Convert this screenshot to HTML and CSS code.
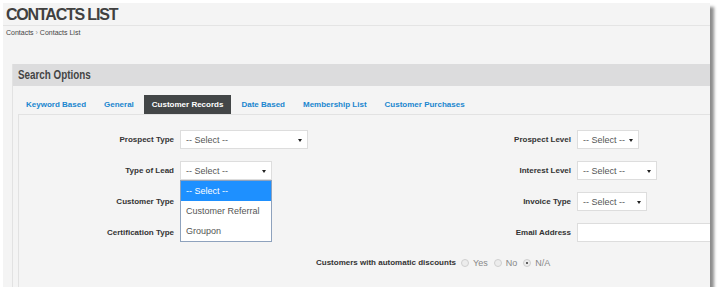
FILE: index.html
```html
<!DOCTYPE html>
<html lang="en">
<head>
    <meta charset="UTF-8">
    <title>Contacts List</title>
    <link rel="stylesheet" href="styles.css">
</head>
<body>
    <div class="shot">
        <h1 class="page-title">CONTACTS LIST</h1>
        <div class="breadcrumb">Contacts <span class="sep">›</span> Contacts List</div>

        <section class="panel">
            <div class="panel-head"><span>Search Options</span></div>

            <nav class="tabs">
                <a class="tab">Keyword Based</a>
                <a class="tab">General</a>
                <a class="tab active">Customer Records</a>
                <a class="tab">Date Based</a>
                <a class="tab">Membership List</a>
                <a class="tab">Customer Purchases</a>
            </nav>

            <div class="tab-body">
                <div class="form-grid">
                    <div class="field">
                        <label>Prospect Type</label>
                        <span class="select w128">-- Select --</span>
                    </div>
                    <div class="field">
                        <label>Prospect Level</label>
                        <span class="select w62">-- Select --</span>
                    </div>

                    <div class="field">
                        <label>Type of Lead</label>
                        <span class="select w92 open">-- Select --
                            <ul class="dropdown">
                                <li class="hl">-- Select --</li>
                                <li>Customer Referral</li>
                                <li>Groupon</li>
                            </ul>
                        </span>
                    </div>
                    <div class="field">
                        <label>Interest Level</label>
                        <span class="select w80">-- Select --</span>
                    </div>

                    <!-- these two sit under the open dropdown -->
                    <div class="field">
                        <label>Customer Type</label>
                        <span class="select w92"></span>
                    </div>
                    <div class="field">
                        <label>Invoice Type</label>
                        <span class="select w70">-- Select --</span>
                    </div>

                    <div class="field">
                        <label>Certification Type</label>
                        <span class="select w92"></span>
                    </div>
                    <div class="field">
                        <label>Email Address</label>
                        <span class="text-input"></span>
                    </div>

                    <div class="field wide">
                        <label>Customers with automatic discounts</label>
                        <div class="radios">
                            <span class="radio"></span><span class="radio-text">Yes</span>
                            <span class="radio"></span><span class="radio-text">No</span>
                            <span class="radio on"></span><span class="radio-text">N/A</span>
                        </div>
                    </div>
                </div>
            </div>
        </section>
    </div>
</body>
</html>
```

FILE: styles.css
```css
* {
    margin: 0;
    padding: 0;
    box-sizing: border-box;
}

body {
    background-color: #ffffff;
    font-family: "Liberation Sans", Arial, sans-serif;
    color: #333;
}

/* screenshot frame */
.shot {
    margin: 3px 0 0 3px;
    width: 707px;
    height: 284px;
    overflow: hidden;
    background-color: #f4f4f4;
    box-shadow: 4px 4px 3px rgba(0, 0, 0, 0.45);
}

.page-title {
    padding: 3px 0 1px 3px;
    font-size: 16px;
    line-height: 18px;
    letter-spacing: -1.2px;
    font-weight: bold;
    color: #404040;
    border-bottom: 1px solid #e4e4e4;
    width: 760px;
}

.breadcrumb {
    padding: 2px 0 0 3px;
    font-size: 7px;
    line-height: 10px;
    color: #444;
}

.breadcrumb .sep {
    color: #999;
}

/* panel */
.panel {
    margin: 26px 0 0 9px;
    width: 800px;
    border-left: 1px solid #e2e2e2;
}

.panel-head {
    height: 22px;
    line-height: 22px;
    padding-left: 5px;
    background-color: #dcdcdd;
    font-size: 12px;
    font-weight: bold;
    color: #444;
}

.panel-head span {
    display: inline-block;
    transform: scaleX(0.82);
    transform-origin: left center;
}

.tabs {
    display: flex;
    margin: 9px 0 0 5px;
}

.tab {
    height: 19px;
    line-height: 19px;
    padding: 0 8px;
    margin-right: 2px;
    font-size: 8px;
    font-weight: bold;
    color: #1a86cf;
}

.tab.active {
    background-color: #434647;
    color: #ffffff;
}

.tab-body {
    margin-left: 5px;
    border-top: 1px solid #e2e2e2;
    border-left: 1px solid #e2e2e2;
    padding: 15px 0 40px;
}

/* form */
.form-grid {
    display: grid;
    grid-template-columns: 397px 397px;
    row-gap: 12px;
}

.field {
    display: grid;
    grid-template-columns: 155px auto;
    column-gap: 6px;
    align-items: center;
    justify-items: start;
}

.field label {
    justify-self: end;
    font-size: 8px;
    font-weight: bold;
    color: #333;
}

.select {
    position: relative;
    display: flex;
    align-items: center;
    height: 19px;
    padding-left: 5px;
    background-color: #ffffff;
    border: 1px solid #dddddd;
    font-size: 9px;
    color: #555;
}

.select::after {
    content: "";
    position: absolute;
    right: 5px;
    top: 8px;
    border-left: 2px solid transparent;
    border-right: 2px solid transparent;
    border-top: 3px solid #222;
}

.w128 { width: 128px; }
.w92 { width: 92px; }
.w80 { width: 80px; }
.w70 { width: 70px; }
.w62 { width: 62px; }

.select.open {
    z-index: 5;
}

.dropdown {
    position: absolute;
    top: 18px;
    left: -1px;
    width: 92px;
    list-style: none;
    background-color: #ffffff;
    border: 1px solid #8ea2bd;
}

.dropdown li {
    height: 20px;
    line-height: 20px;
    padding-left: 5px;
    font-size: 9px;
    color: #555;
}

.dropdown li.hl {
    background-color: #1e90ff;
    color: #ffffff;
}

.text-input {
    display: block;
    width: 200px;
    height: 19px;
    background-color: #ffffff;
    border: 1px solid #dddddd;
}

.field.wide {
    grid-column: 1 / -1;
    grid-template-columns: 437px auto;
    column-gap: 5px;
    height: 17px;
}

.radios {
    display: flex;
    align-items: center;
}

.radio {
    position: relative;
    width: 8px;
    height: 8px;
    border-radius: 50%;
    border: 1px solid #cfcfcf;
    background-color: #ececec;
    margin-right: 4px;
}

.radio.on::after {
    content: "";
    position: absolute;
    left: 2px;
    top: 2px;
    width: 2px;
    height: 2px;
    border-radius: 50%;
    background-color: #333;
}

.radio-text {
    font-size: 9px;
    color: #888;
    margin-right: 6px;
}
```
